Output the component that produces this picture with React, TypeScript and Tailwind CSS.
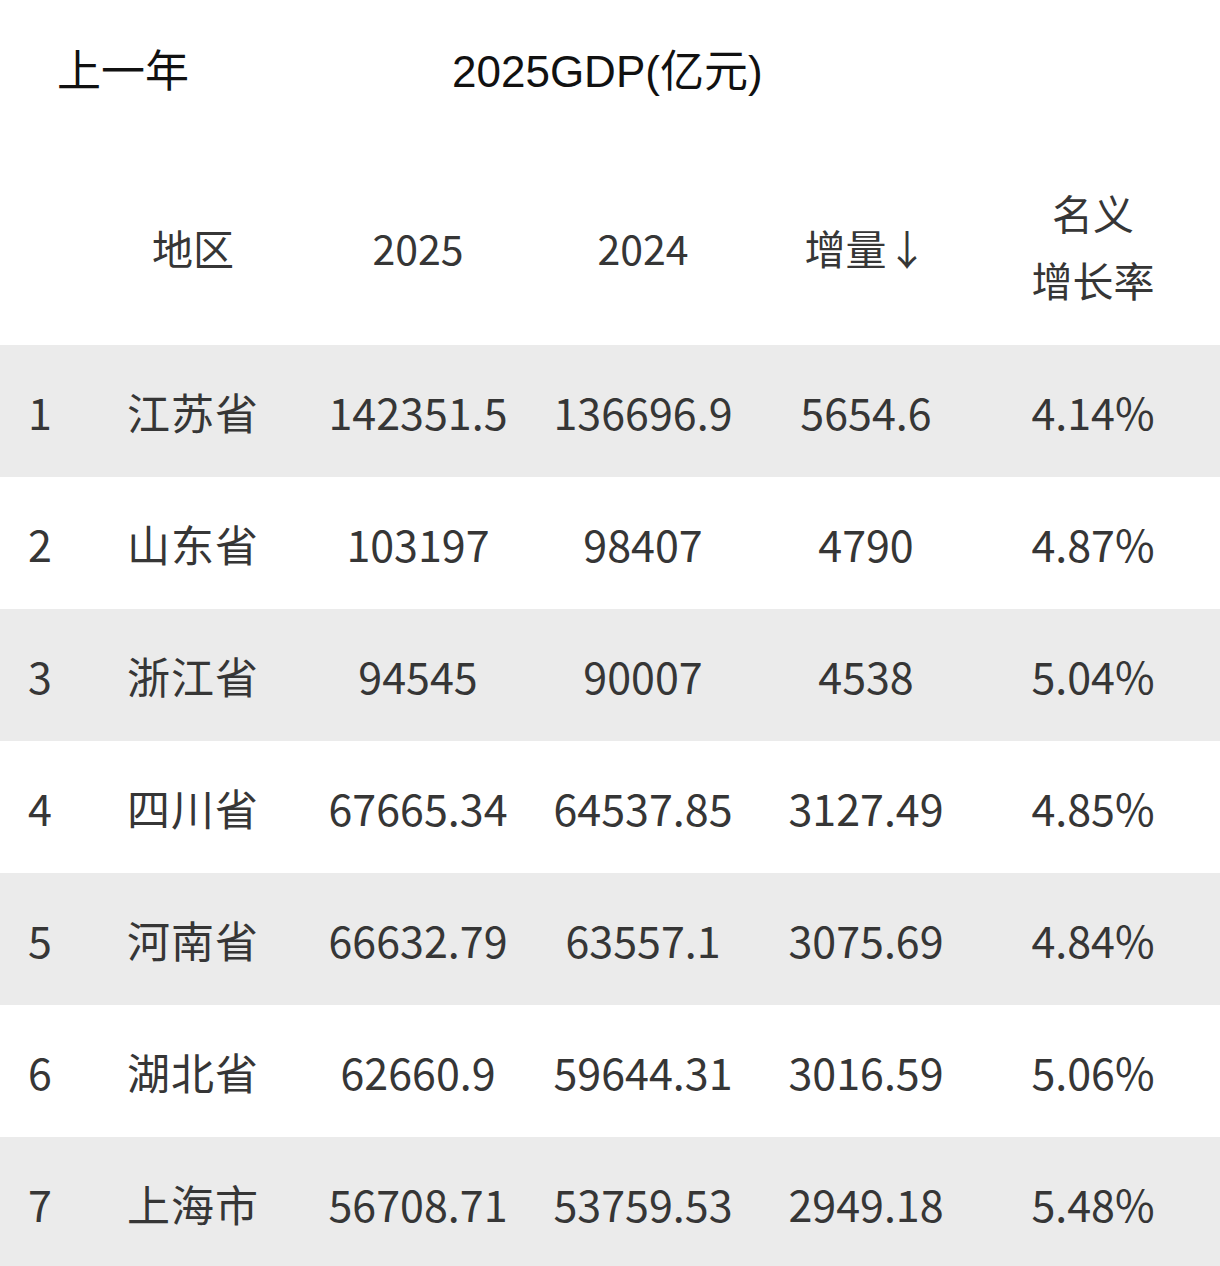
import React from 'react';

type Row = {
  rank: number;
  region: string;
  y2025: string;
  y2024: string;
  inc: string;
  rate: string;
};

const rows: Row[] = [
  { rank: 1, region: '江苏省', y2025: '142351.5', y2024: '136696.9', inc: '5654.6', rate: '4.14%' },
  { rank: 2, region: '山东省', y2025: '103197', y2024: '98407', inc: '4790', rate: '4.87%' },
  { rank: 3, region: '浙江省', y2025: '94545', y2024: '90007', inc: '4538', rate: '5.04%' },
  { rank: 4, region: '四川省', y2025: '67665.34', y2024: '64537.85', inc: '3127.49', rate: '4.85%' },
  { rank: 5, region: '河南省', y2025: '66632.79', y2024: '63557.1', inc: '3075.69', rate: '4.84%' },
  { rank: 6, region: '湖北省', y2025: '62660.9', y2024: '59644.31', inc: '3016.59', rate: '5.06%' },
  { rank: 7, region: '上海市', y2025: '56708.71', y2024: '53759.53', inc: '2949.18', rate: '5.48%' },
];

const cols = 'grid grid-cols-[80px_226px_224px_226px_220px_234px] items-center text-center';

const App: React.FC = () => {
  return (
    <div
      className="w-[1220px] h-[1266px] overflow-hidden bg-white text-[#363636]"
      style={{ fontFamily: '"Noto Sans CJK SC", "Noto Sans", sans-serif' }}
    >
      {/* title bar */}
      <div
        className="h-[150px] flex items-start pt-[48px] text-[44px] leading-[48px] text-[#111111]"
        style={{ fontFamily: '"Liberation Sans", "Noto Sans CJK SC", sans-serif' }}
      >
        <span className="ml-[57px]">上一年</span>
        <span className="ml-[263px]">2025GDP(亿元)</span>
      </div>

      {/* header */}
      <div className={`${cols} h-[195px] text-[41px]`}>
        <div />
        <div>地区</div>
        <div>2025</div>
        <div>2024</div>
        <div>增量↓</div>
        <div className="leading-[67px] -mt-[4px]">
          名义
          <br />
          增长率
        </div>
      </div>

      {/* rows */}
      {rows.map((r, i) => (
        <div
          key={r.rank}
          className={`${cols} h-[132px] text-[43px] ${i % 2 === 0 ? 'bg-[#ebebeb]' : 'bg-white'}`}
        >
          <div>{r.rank}</div>
          <div className="tracking-[1px]">{r.region}</div>
          <div>{r.y2025}</div>
          <div>{r.y2024}</div>
          <div>{r.inc}</div>
          <div>{r.rate}</div>
        </div>
      ))}
    </div>
  );
};

export default App;
